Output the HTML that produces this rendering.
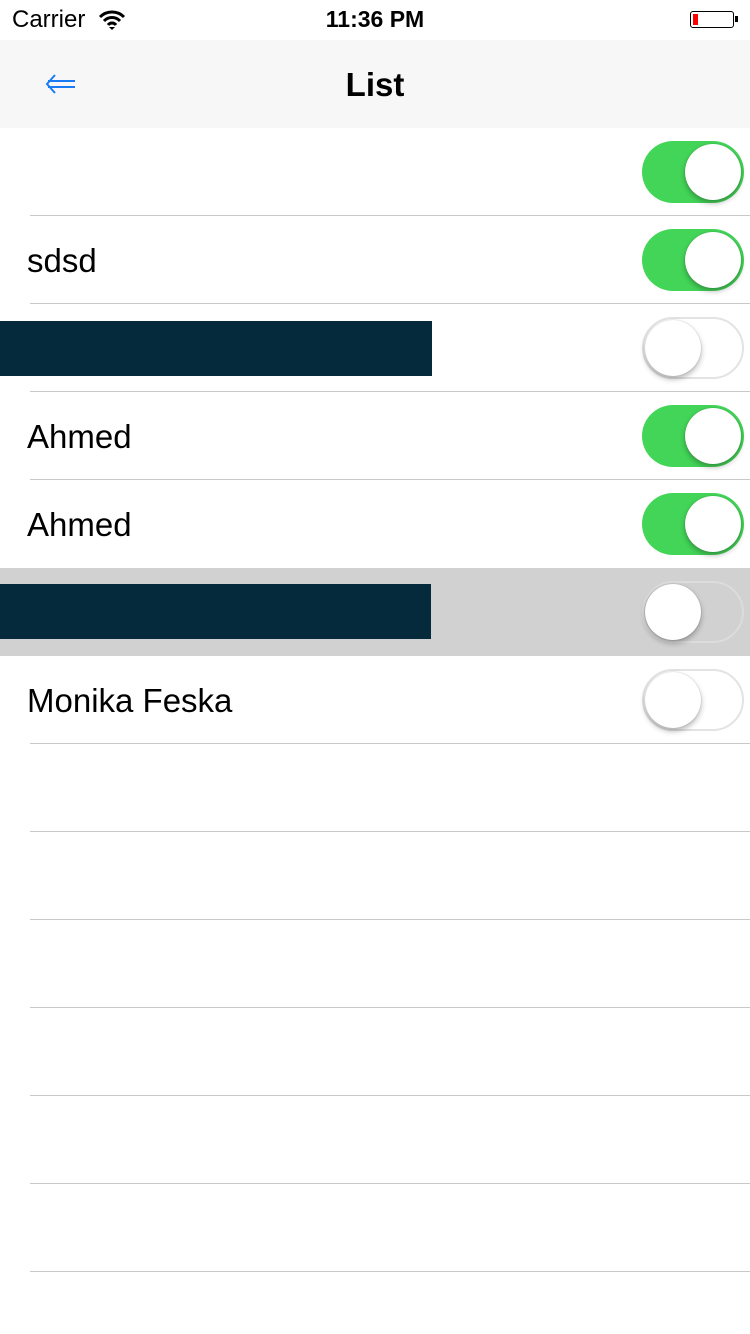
<!DOCTYPE html>
<html><head><style>
body{margin:0;width:750px;height:1334px;background:#fff;font-family:"Liberation Sans",sans-serif;position:relative;overflow:hidden}
.abs{position:absolute}
.row{position:absolute;left:0;width:750px;height:88px}
.sep{position:absolute;left:30px;right:0;height:1px;background:#c8c7cc}
.lbl{position:absolute;left:27px;font-size:33px;color:#000;top:26px}
.tg{position:absolute;left:642px;top:13px;width:102px;height:62px;border-radius:31px;box-sizing:border-box}
.on{background:#43d558}
.off{border:2px solid #e3e3e3;background:transparent}
.knob{position:absolute;width:56px;height:56px;border-radius:50%;background:#fff;box-shadow:0 3px 6px rgba(0,0,0,.3),0 0 1px rgba(0,0,0,.3)}
.on .knob{left:43px;top:3px}
.off .knob{left:1px;top:1px}
.bar{position:absolute;left:0;background:#052a3c;height:55px}
</style></head><body>
<div class="abs" style="left:12px;top:6px;font-size:24px">Carrier</div>
<svg class="abs" style="left:98px;top:9px" width="28" height="22" viewBox="0 0 28 22"><path d="M2 8a17 17 0 0 1 24 0M6 12a11 11 0 0 1 16 0M10 16a5 5 0 0 1 8 0" stroke="#000" stroke-width="3" fill="none"/><path d="M11 18l3 3 3-3z" fill="#000"/></svg>
<div class="abs" style="left:0;width:750px;text-align:center;top:6px;font-size:23px;font-weight:bold">11:36 PM</div>
<div class="abs" style="left:690px;top:11px;width:44px;height:17px;border:1px solid #000;border-radius:3px;box-sizing:border-box"><div style="position:absolute;left:2px;top:2px;width:5px;height:11px;background:#f00"></div></div>
<div class="abs" style="left:735px;top:16px;width:3px;height:6px;background:#000"></div>
<div class="abs" style="left:0;top:40px;width:750px;height:88px;background:#f7f7f7"></div>
<svg class="abs" style="left:44px;top:72px" width="32" height="24" viewBox="0 0 32 24"><path d="M11 3L3 12l8 9M4 9h27M4 15h27" stroke="#1a7cf5" stroke-width="2" fill="none"/></svg>
<div class="abs" style="left:0;width:750px;text-align:center;top:66px;font-size:33px;font-weight:bold">List</div>

<div class="row" style="top:128px"><div class="tg on"><div class="knob"></div></div><div class="sep" style="top:87px"></div></div>
<div class="row" style="top:216px"><div class="lbl">sdsd</div><div class="tg on"><div class="knob"></div></div><div class="sep" style="top:87px"></div></div>
<div class="row" style="top:304px"><div class="bar" style="top:17px;width:432px"></div><div class="tg off"><div class="knob"></div></div><div class="sep" style="top:87px"></div></div>
<div class="row" style="top:392px"><div class="lbl">Ahmed</div><div class="tg on"><div class="knob"></div></div><div class="sep" style="top:87px"></div></div>
<div class="row" style="top:480px"><div class="lbl">Ahmed</div><div class="tg on"><div class="knob"></div></div></div>
<div class="row" style="top:568px;background:#d1d1d1"><div class="bar" style="top:16px;width:431px"></div><div class="tg off" style="border-color:#dcdcdc"><div class="knob"></div></div></div>
<div class="row" style="top:656px"><div class="lbl">Monika Feska</div><div class="tg off"><div class="knob"></div></div><div class="sep" style="top:87px"></div></div>
<div class="sep" style="top:831px"></div>
<div class="sep" style="top:919px"></div>
<div class="sep" style="top:1007px"></div>
<div class="sep" style="top:1095px"></div>
<div class="sep" style="top:1183px"></div>
<div class="sep" style="top:1271px"></div>
</body></html>
